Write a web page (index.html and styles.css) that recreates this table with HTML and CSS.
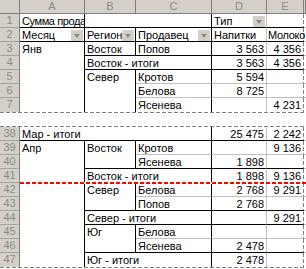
FILE: index.html
```html
<!DOCTYPE html>
<html lang="ru">
<head>
<meta charset="utf-8">
<title>Сводная таблица</title>
<link rel="stylesheet" href="styles.css">
</head>
<body>
<div class="sheet">
  <div class="grid">
    <div class="corner"></div>
    <div class="ch">A</div><div class="ch">B</div><div class="ch">C</div><div class="ch">D</div><div class="ch">E</div><div class="ch"></div>

    <div class="rh">1</div>
    <div class="c kr kb tight">Сумма прода</div>
    <div class="c s2 kr kb"></div>
    <div class="c kb fld"><span class="t">Тип</span><span class="dd"></span></div>
    <div class="c pg kb"></div>
    <div class="c f"></div>

    <div class="rh">2</div>
    <div class="c kr kb fld"><span class="t">Месяц</span><span class="dd"></span></div>
    <div class="c kr kb fld"><span class="t">Регион</span><span class="dd"></span></div>
    <div class="c kr kb fld"><span class="t">Продавец</span><span class="dd"></span></div>
    <div class="c kb">Напитки</div>
    <div class="c pg kb spill">Молоко</div>
    <div class="c f"></div>

    <div class="rh">3</div>
    <div class="c r5 kr nb">Янв</div>
    <div class="c kr kb">Восток</div>
    <div class="c kr kb">Попов</div>
    <div class="c n kb">3 563</div>
    <div class="c n pg kb">4 356</div>
    <div class="c f"></div>

    <div class="rh">4</div>
    <div class="c s2 kr kb">Восток - итоги</div>
    <div class="c n kb">3 563</div>
    <div class="c n pg kb">4 356</div>
    <div class="c f"></div>

    <div class="rh">5</div>
    <div class="c r3 kr nb">Север</div>
    <div class="c kr">Кротов</div>
    <div class="c n">5 594</div>
    <div class="c n pg"></div>
    <div class="c f"></div>

    <div class="rh">6</div>
    <div class="c kr">Белова</div>
    <div class="c n">8 725</div>
    <div class="c n pg"></div>
    <div class="c f"></div>

    <div class="rh nb">7</div>
    <div class="c kr nb">Ясенева</div>
    <div class="c n nb"></div>
    <div class="c n pg nb">4 231</div>
    <div class="c f nb"></div>
  </div>

  <div class="gap"></div>

  <div class="grid">
    <div class="rh">38</div>
    <div class="c s3 kr kb">Мар - итоги</div>
    <div class="c n kb">25 475</div>
    <div class="c n pg kb">2 242</div>
    <div class="c f"></div>

    <div class="rh">39</div>
    <div class="c r9 kr nb">Апр</div>
    <div class="c r2 kr kb">Восток</div>
    <div class="c kr">Кротов</div>
    <div class="c n"></div>
    <div class="c n pg">9 136</div>
    <div class="c f"></div>

    <div class="rh">40</div>
    <div class="c kr kb">Ясенева</div>
    <div class="c n kb">1 898</div>
    <div class="c n pg kb"></div>
    <div class="c f"></div>

    <div class="rh">41</div>
    <div class="c s2 kr kb">Восток - итоги</div>
    <div class="c n kb">1 898</div>
    <div class="c n pg kb">9 136</div>
    <div class="c f"></div>

    <div class="rh">42</div>
    <div class="c r2 kr kb">Север</div>
    <div class="c kr">Белова</div>
    <div class="c n">2 768</div>
    <div class="c n pg">9 291</div>
    <div class="c f"></div>

    <div class="rh">43</div>
    <div class="c kr kb">Попов</div>
    <div class="c n kb">2 768</div>
    <div class="c n pg kb"></div>
    <div class="c f"></div>

    <div class="rh">44</div>
    <div class="c s2 kr kb">Север - итоги</div>
    <div class="c n kb"></div>
    <div class="c n pg kb">9 291</div>
    <div class="c f"></div>

    <div class="rh">45</div>
    <div class="c r2 kr kb">Юг</div>
    <div class="c kr">Белова</div>
    <div class="c n"></div>
    <div class="c n pg"></div>
    <div class="c f"></div>

    <div class="rh">46</div>
    <div class="c kr kb">Ясенева</div>
    <div class="c n kb">2 478</div>
    <div class="c n pg kb"></div>
    <div class="c f"></div>

    <div class="rh nb">47</div>
    <div class="c s2 kr nb">Юг - итоги</div>
    <div class="c n nb">2 478</div>
    <div class="c n pg nb"></div>
    <div class="c f nb"></div>
  </div>

  <div class="brk"></div>
  <div class="redbreak"></div>
</div>
</body>
</html>
```

FILE: styles.css
```css
html, body {
  margin: 0;
  padding: 0;
  background: #fff;
}
body {
  width: 306px;
  height: 269px;
  overflow: hidden;
  font-family: "Liberation Sans", Arial, sans-serif;
  font-size: 11px;
  color: #000;
}
.sheet {
  position: relative;
  width: 306px;
  overflow: hidden;
}
.grid {
  display: grid;
  grid-template-columns: 20px 65px 51px 76px 55px 37px 2px;
  grid-auto-rows: 14px;
}
.corner, .ch, .rh {
  box-sizing: border-box;
  background: #d4d0c8;
  color: #8a8a8a;
  text-align: center;
  line-height: 13px;
  border-right: 1px solid #808080;
  border-bottom: 1px solid #808080;
}
.rh {
  border-bottom-color: #a6a39c;
}
.c {
  box-sizing: border-box;
  border-right: 1px solid #c0c0c0;
  border-bottom: 1px solid #c0c0c0;
  padding: 2px 2px 0 2px;
  line-height: 11px;
  white-space: nowrap;
  overflow: hidden;
  min-width: 0;
}
.tight { letter-spacing: -0.4px; }
.spill { overflow: visible; padding-left: 1px; letter-spacing: -0.3px; }
.kr { border-right-color: #000; }
.kb { border-bottom-color: #000; }
.nb { border-bottom: none; }
.n { text-align: right; }
.s2 { grid-column: span 2; }
.s3 { grid-column: span 3; }
.r2 { grid-row: span 2; }
.r3 { grid-row: span 3; }
.r5 { grid-row: span 5; }
.r9 { grid-row: span 9; }
.f { border-right: none; padding: 0; }
.pg {
  border-right-color: transparent;
  background-image: repeating-linear-gradient(to bottom, #808080 0 4px, transparent 4px 6px);
  background-size: 1px 100%;
  background-position: right top;
  background-repeat: no-repeat;
  background-origin: border-box;
}
.fld {
  display: flex;
  align-items: flex-start;
}
.fld .t {
  flex: 1 1 auto;
  min-width: 0;
  overflow: hidden;
}
.dd {
  flex: 0 0 auto;
  position: relative;
  width: 12px;
  height: 11px;
  margin-right: -1px;
  background: #d4d0c8;
}
.dd::after {
  content: "";
  position: absolute;
  left: 3px;
  top: 4px;
  border-left: 3px solid transparent;
  border-right: 3px solid transparent;
  border-top: 4px solid #8a8a8a;
}
.gap {
  height: 15px;
  background-image:
    repeating-linear-gradient(to right, #808080 0 4px, transparent 4px 6px),
    repeating-linear-gradient(to right, #808080 0 4px, transparent 4px 6px);
  background-size: 100% 1px, 100% 1px;
  background-position: 0 0, 0 100%;
  background-repeat: no-repeat;
}
.brk {
  height: 1px;
  background: repeating-linear-gradient(to right, #808080 0 4px, transparent 4px 6px);
}
.redbreak {
  position: absolute;
  left: 20px;
  top: 182px;
  width: 286px;
  height: 2px;
  background: repeating-linear-gradient(to right, #ff0000 0 4px, #fff 4px 6px);
}
```
